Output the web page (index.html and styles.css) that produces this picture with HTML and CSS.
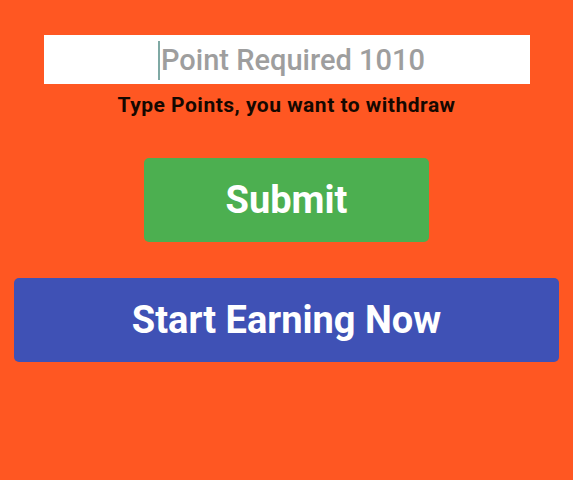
FILE: index.html
```html
<!DOCTYPE html>
<html>
<head>
<meta charset="utf-8">
<link rel="stylesheet" href="styles.css">
</head>
<body>
<main class="screen">
  <div class="field">
    <span class="caret"></span><span class="placeholder">Point Required 1010</span>
  </div>
  <p class="hint">Type Points, you want to withdraw</p>
  <button class="btn btn-submit">Submit</button>
  <button class="btn btn-earn">Start Earning Now</button>
</main>
</body>
</html>
```
FILE: styles.css
```css
html, body {
  margin: 0;
  padding: 0;
  height: 100%;
}

body {
  background: #ff5722;
  font-family: Roboto, "Noto Sans", sans-serif;
}

.screen {
  display: flex;
  flex-direction: column;
  align-items: center;
  padding-top: 35px;
}

.field {
  box-sizing: border-box;
  width: 486px;
  height: 49px;
  margin-left: 1px;
  padding-left: 9px;
  background: #fff;
  display: flex;
  align-items: center;
  justify-content: center;
}

.caret {
  width: 2px;
  height: 39px;
  margin-top: 2px;
  margin-right: 1px;
  background: #7fa9a4;
}

.placeholder {
  font-size: 29px;
  font-weight: 500;
  color: #9e9e9e;
}

.hint {
  margin: 9px 0 0;
  font-size: 21px;
  font-weight: 700;
  letter-spacing: 0.5px;
  color: #150800;
}

.btn {
  border: none;
  border-radius: 5px;
  color: #fff;
  font-family: Roboto, "Noto Sans", sans-serif;
  font-weight: 700;
  cursor: pointer;
}

.btn-submit {
  margin-top: 41px;
  width: 285px;
  height: 84px;
  background: #4caf50;
  font-size: 38px;
}

.btn-earn {
  margin-top: 36px;
  width: 545px;
  height: 84px;
  background: #3f51b5;
  font-size: 38px;
}
```
